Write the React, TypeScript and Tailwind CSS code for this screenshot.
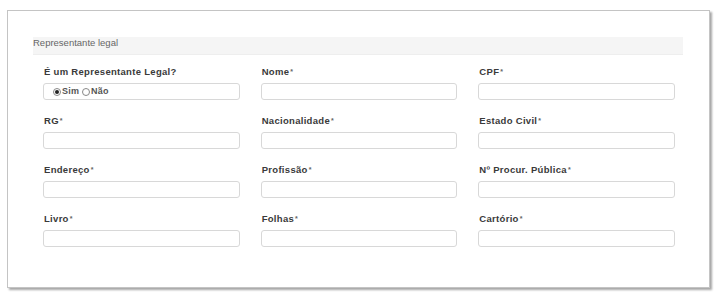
const fields = [
  'Nome',
  'CPF',
  'RG',
  'Nacionalidade',
  'Estado Civil',
  'Endereço',
  'Profissão',
  'Nº Procur. Pública',
  'Livro',
  'Folhas',
  'Cartório',
]

function Radio({ checked, label }: { checked?: boolean; label: string }) {
  return (
    <span className="flex items-center gap-[1px]">
      <span className="flex h-[8px] w-[8px] items-center justify-center rounded-full border border-[#888] bg-white">
        {checked && <span className="h-[4px] w-[4px] rounded-full bg-[#222]" />}
      </span>
      <span className="text-[9px] font-bold tracking-[0.2px] text-[#555]">{label}</span>
    </span>
  )
}

function Field({ label, star = true, children }: { label: string; star?: boolean; children?: React.ReactNode }) {
  return (
    <div className="flex flex-col">
      <label className="mb-[4px] h-[14px] pl-[1px] text-[9.5px] font-bold leading-[14px] tracking-[0.3px] text-[#3a3a3a]">
        {label}
        {star && <span className="relative -top-[1px] ml-[1px] text-[7px] text-[#666]">*</span>}
      </label>
      {children ?? <div className="h-[17px] rounded-[3px] border border-[#d8d8d8] bg-white" />}
    </div>
  )
}

export default function App() {
  return (
    <div className="h-[299px] w-[718px] bg-white pl-[7px] pt-[10px]" style={{ fontFamily: '"Liberation Sans", Arial, sans-serif' }}>
      <div className="h-[278px] w-[703px] border border-[#c4c4c4] bg-white shadow-[2px_2px_2px_rgba(0,0,0,0.35)]">
        <div className="ml-[25px] mt-[26px] h-[18px] w-[650px] border-b border-[#eeeeee] bg-[#f5f5f5]">
          <span className="block text-[9.5px] leading-[11px] text-[#666]">Representante legal</span>
        </div>
        <div className="ml-[35px] mt-[10px] grid w-[632px] grid-cols-3 gap-x-[21px] gap-y-[14px]">
          <Field label="É um Representante Legal?" star={false}>
            <div className="flex h-[17px] items-center gap-[3px] rounded-[3px] border border-[#d8d8d8] bg-white pl-[9px]">
              <Radio checked label="Sim" />
              <Radio label="Não" />
            </div>
          </Field>
          {fields.map(f => (
            <Field key={f} label={f} />
          ))}
        </div>
      </div>
    </div>
  )
}
